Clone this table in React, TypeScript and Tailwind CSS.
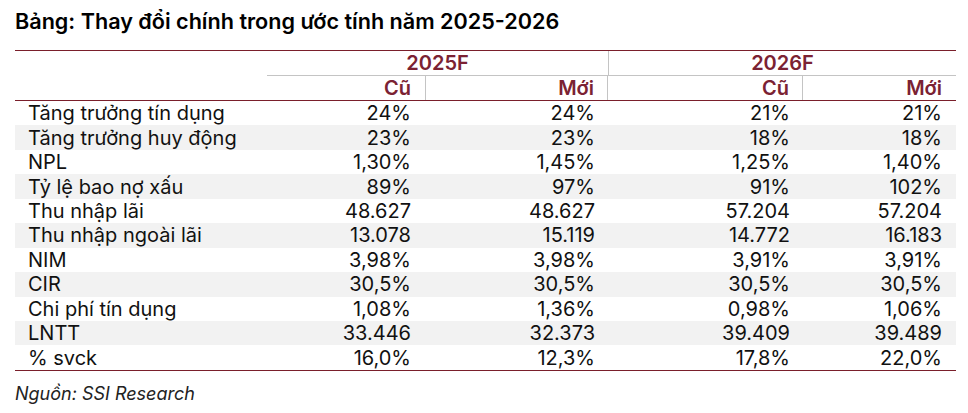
import React from "react";

const rows: [string, string, string, string, string][] = [
  ["Tăng trưởng tín dụng", "24%", "24%", "21%", "21%"],
  ["Tăng trưởng huy động", "23%", "23%", "18%", "18%"],
  ["NPL", "1,30%", "1,45%", "1,25%", "1,40%"],
  ["Tỷ lệ bao nợ xấu", "89%", "97%", "91%", "102%"],
  ["Thu nhập lãi", "48.627", "48.627", "57.204", "57.204"],
  ["Thu nhập ngoài lãi", "13.078", "15.119", "14.772", "16.183"],
  ["NIM", "3,98%", "3,98%", "3,91%", "3,91%"],
  ["CIR", "30,5%", "30,5%", "30,5%", "30,5%"],
  ["Chi phí tín dụng", "1,08%", "1,36%", "0,98%", "1,06%"],
  ["LNTT", "33.446", "32.373", "39.409", "39.489"],
  ["% svck", "16,0%", "12,3%", "17,8%", "22,0%"],
];

export default function App() {
  return (
    <div
      className="w-[968px] h-[413px] bg-white text-[#111] overflow-hidden"
      style={{ fontFamily: 'Inter, "Liberation Sans", Arial, sans-serif' }}
    >
      <div className="pl-[15px] pt-[6px] h-[50px] text-[21.6px] font-semibold leading-[30px] text-black">
        Bảng: Thay đổi chính trong ước tính năm 2025-2026
      </div>
      <div className="ml-[15px] w-[941px] border-t border-[#7a1f2b]">
        {/* header row 1 */}
        <div className="flex h-[25px]">
          <div className="w-[252px]" />
          <div className="w-[341px] border-b border-[#c4c4c4] text-center text-[20px] font-semibold text-[#7b2233] leading-[24px]">
            2025F
          </div>
          <div className="w-[348px] border-b border-l border-[#c4c4c4] text-center text-[20px] font-semibold text-[#7b2233] leading-[24px]">
            2026F
          </div>
        </div>
        {/* header row 2 */}
        <div className="flex h-[25px] border-b border-[#7a1f2b] text-[20px] font-semibold text-[#7b2233] leading-[24px]">
          <div className="w-[252px]" />
          <div className="w-[159px] border-r border-[#c4c4c4] text-right pr-[14px]">Cũ</div>
          <div className="w-[182px] border-r border-[#c4c4c4] text-right pr-[13px]">Mới</div>
          <div className="w-[195px] border-r border-[#c4c4c4] text-right pr-[13px]">Cũ</div>
          <div className="w-[153px] text-right pr-[14px]">Mới</div>
        </div>
        {/* body */}
        <div className="border-b border-[#7a1f2b]">
          {rows.map((r, i) => (
            <div
              key={i}
              className={`flex h-[24.45px] items-center text-[20px] leading-[24px] ${
                i % 2 === 1 ? "bg-[#f2f2f2]" : "bg-white"
              }`}
            >
              <div className="w-[252px] pl-[13px] whitespace-nowrap">{r[0]}</div>
              <div className="w-[159px] text-right pr-[15px]">{r[1]}</div>
              <div className="w-[182px] text-right pr-[13px]">{r[2]}</div>
              <div className="w-[195px] text-right pr-[13px]">{r[3]}</div>
              <div className="w-[153px] text-right pr-[14px]">{r[4]}</div>
            </div>
          ))}
        </div>
      </div>
      <div className="pl-[15px] pt-[11px] text-[18px] italic leading-[24px] text-[#222]">
        Nguồn: SSI Research
      </div>
    </div>
  );
}
